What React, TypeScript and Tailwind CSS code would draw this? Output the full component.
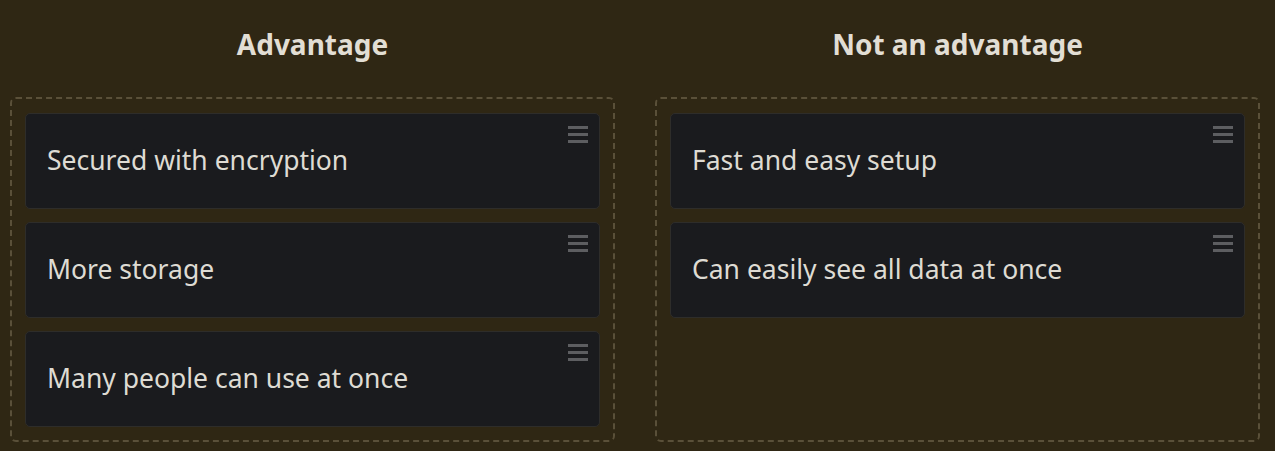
import React from "react";

const columns = [
  {
    title: "Advantage",
    items: ["Secured with encryption", "More storage", "Many people can use at once"],
  },
  {
    title: "Not an advantage",
    items: ["Fast and easy setup", "Can easily see all data at once"],
  },
];

function Handle() {
  return (
    <div className="absolute right-[11px] top-[12px] flex flex-col gap-[4px]">
      <span className="block w-[20px] h-[3px] bg-[#5d5e61]" />
      <span className="block w-[20px] h-[3px] bg-[#5d5e61]" />
      <span className="block w-[20px] h-[3px] bg-[#5d5e61]" />
    </div>
  );
}

export default function App() {
  return (
    <div
      className="min-h-[451px] w-full bg-[#2f2714] pl-[10px] pr-[15px] text-[#dedbd3]"
      style={{ fontFamily: '"Noto Sans", "Open Sans", sans-serif' }}
    >
      <div className="grid grid-cols-2 gap-[40px]">
        {columns.map((col) => (
          <div key={col.title} className="flex flex-col">
            <h2 className="h-[97px] pt-[25px] text-center text-[28px] font-bold leading-[38px] text-[#e2ded4]">
              {col.title}
            </h2>
            <div className="flex-1 rounded-[6px] border-2 border-dashed border-[#5a5039] px-[13px] pt-[14px] pb-[13px] flex flex-col gap-[13px] min-h-[345px]">
              {col.items.map((item) => (
                <div
                  key={item}
                  className="relative h-[96px] flex items-center rounded-[5px] border border-[#2e2d2a] bg-[#1a1b1e] px-[21px] text-[26.5px]"
                >
                  {item}
                  <Handle />
                </div>
              ))}
            </div>
          </div>
        ))}
      </div>
    </div>
  );
}
